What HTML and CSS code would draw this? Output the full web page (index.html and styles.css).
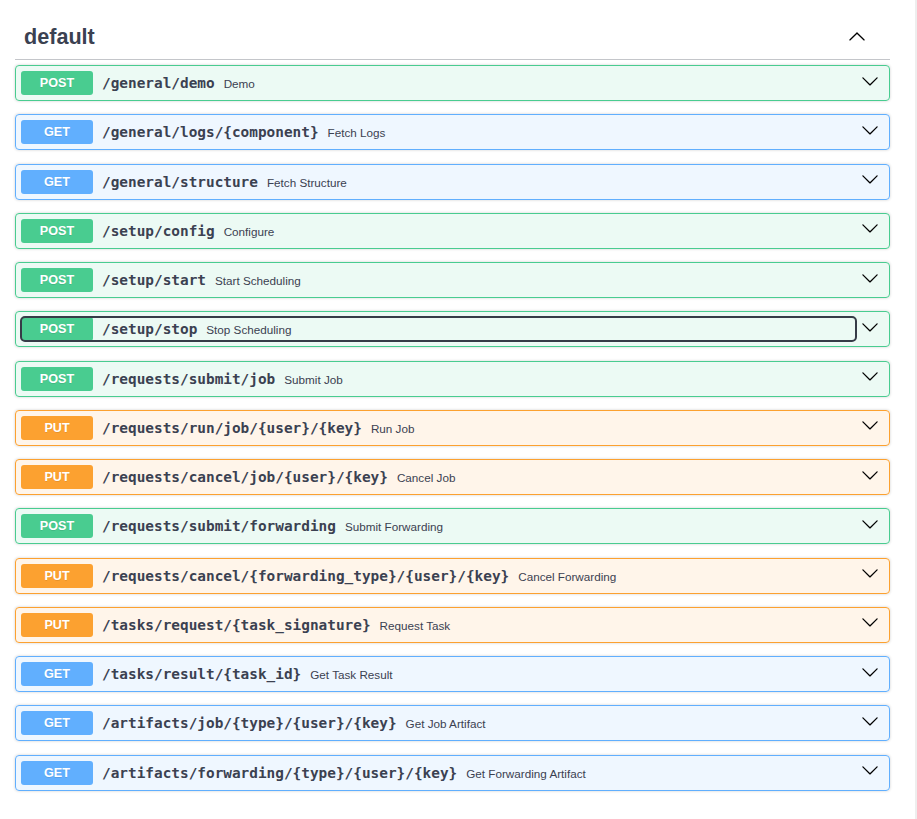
FILE: index.html
```html
<!DOCTYPE html>
<html lang="en">
<head>
<meta charset="utf-8">
<title>default</title>
<link rel="stylesheet" href="styles.css">
</head>
<body>
<div class="wrapper">
  <div class="tag">
    <h3 class="tag-title">default</h3>
    <button class="tag-toggle" aria-label="Collapse">
      <svg class="icon" viewBox="0 0 20 20" width="18" height="18"><path d="M17.418 14.908c.272.268.709.268.979 0s.271-.701 0-.969l-7.908-7.83c-.27-.268-.707-.268-.979 0l-7.908 7.83c-.27.268-.27.701 0 .969.271.268.709.268.979 0L10 7.767l7.418 7.141z"/></svg>
    </button>
  </div>

  <div class="op op-post"><div class="summary"><div class="control"><span class="method">POST</span><span class="path">/general/demo</span><span class="desc">Demo</span></div><span class="arrow"><svg class="icon" viewBox="0 0 20 20" width="18" height="18"><path d="M17.418 6.109c.272-.268.709-.268.979 0s.271.701 0 .969l-7.908 7.83c-.27.268-.707.268-.979 0l-7.908-7.83c-.27-.268-.27-.701 0-.969.271-.268.709-.268.979 0L10 13.25l7.418-7.141z"/></svg></span></div></div>

  <div class="op op-get"><div class="summary"><div class="control"><span class="method">GET</span><span class="path">/general/logs/{component}</span><span class="desc">Fetch Logs</span></div><span class="arrow"><svg class="icon" viewBox="0 0 20 20" width="18" height="18"><path d="M17.418 6.109c.272-.268.709-.268.979 0s.271.701 0 .969l-7.908 7.83c-.27.268-.707.268-.979 0l-7.908-7.83c-.27-.268-.27-.701 0-.969.271-.268.709-.268.979 0L10 13.25l7.418-7.141z"/></svg></span></div></div>

  <div class="op op-get"><div class="summary"><div class="control"><span class="method">GET</span><span class="path">/general/structure</span><span class="desc">Fetch Structure</span></div><span class="arrow"><svg class="icon" viewBox="0 0 20 20" width="18" height="18"><path d="M17.418 6.109c.272-.268.709-.268.979 0s.271.701 0 .969l-7.908 7.83c-.27.268-.707.268-.979 0l-7.908-7.83c-.27-.268-.27-.701 0-.969.271-.268.709-.268.979 0L10 13.25l7.418-7.141z"/></svg></span></div></div>

  <div class="op op-post"><div class="summary"><div class="control"><span class="method">POST</span><span class="path">/setup/config</span><span class="desc">Configure</span></div><span class="arrow"><svg class="icon" viewBox="0 0 20 20" width="18" height="18"><path d="M17.418 6.109c.272-.268.709-.268.979 0s.271.701 0 .969l-7.908 7.83c-.27.268-.707.268-.979 0l-7.908-7.83c-.27-.268-.27-.701 0-.969.271-.268.709-.268.979 0L10 13.25l7.418-7.141z"/></svg></span></div></div>

  <div class="op op-post"><div class="summary"><div class="control"><span class="method">POST</span><span class="path">/setup/start</span><span class="desc">Start Scheduling</span></div><span class="arrow"><svg class="icon" viewBox="0 0 20 20" width="18" height="18"><path d="M17.418 6.109c.272-.268.709-.268.979 0s.271.701 0 .969l-7.908 7.83c-.27.268-.707.268-.979 0l-7.908-7.83c-.27-.268-.27-.701 0-.969.271-.268.709-.268.979 0L10 13.25l7.418-7.141z"/></svg></span></div></div>

  <div class="op op-post"><div class="summary"><div class="control focused"><span class="method">POST</span><span class="path">/setup/stop</span><span class="desc">Stop Scheduling</span></div><span class="arrow"><svg class="icon" viewBox="0 0 20 20" width="18" height="18"><path d="M17.418 6.109c.272-.268.709-.268.979 0s.271.701 0 .969l-7.908 7.83c-.27.268-.707.268-.979 0l-7.908-7.83c-.27-.268-.27-.701 0-.969.271-.268.709-.268.979 0L10 13.25l7.418-7.141z"/></svg></span></div></div>

  <div class="op op-post"><div class="summary"><div class="control"><span class="method">POST</span><span class="path">/requests/submit/job</span><span class="desc">Submit Job</span></div><span class="arrow"><svg class="icon" viewBox="0 0 20 20" width="18" height="18"><path d="M17.418 6.109c.272-.268.709-.268.979 0s.271.701 0 .969l-7.908 7.83c-.27.268-.707.268-.979 0l-7.908-7.83c-.27-.268-.27-.701 0-.969.271-.268.709-.268.979 0L10 13.25l7.418-7.141z"/></svg></span></div></div>

  <div class="op op-put"><div class="summary"><div class="control"><span class="method">PUT</span><span class="path">/requests/run/job/{user}/{key}</span><span class="desc">Run Job</span></div><span class="arrow"><svg class="icon" viewBox="0 0 20 20" width="18" height="18"><path d="M17.418 6.109c.272-.268.709-.268.979 0s.271.701 0 .969l-7.908 7.83c-.27.268-.707.268-.979 0l-7.908-7.83c-.27-.268-.27-.701 0-.969.271-.268.709-.268.979 0L10 13.25l7.418-7.141z"/></svg></span></div></div>

  <div class="op op-put"><div class="summary"><div class="control"><span class="method">PUT</span><span class="path">/requests/cancel/job/{user}/{key}</span><span class="desc">Cancel Job</span></div><span class="arrow"><svg class="icon" viewBox="0 0 20 20" width="18" height="18"><path d="M17.418 6.109c.272-.268.709-.268.979 0s.271.701 0 .969l-7.908 7.83c-.27.268-.707.268-.979 0l-7.908-7.83c-.27-.268-.27-.701 0-.969.271-.268.709-.268.979 0L10 13.25l7.418-7.141z"/></svg></span></div></div>

  <div class="op op-post"><div class="summary"><div class="control"><span class="method">POST</span><span class="path">/requests/submit/forwarding</span><span class="desc">Submit Forwarding</span></div><span class="arrow"><svg class="icon" viewBox="0 0 20 20" width="18" height="18"><path d="M17.418 6.109c.272-.268.709-.268.979 0s.271.701 0 .969l-7.908 7.83c-.27.268-.707.268-.979 0l-7.908-7.83c-.27-.268-.27-.701 0-.969.271-.268.709-.268.979 0L10 13.25l7.418-7.141z"/></svg></span></div></div>

  <div class="op op-put"><div class="summary"><div class="control"><span class="method">PUT</span><span class="path">/requests/cancel/{forwarding_type}/{user}/{key}</span><span class="desc">Cancel Forwarding</span></div><span class="arrow"><svg class="icon" viewBox="0 0 20 20" width="18" height="18"><path d="M17.418 6.109c.272-.268.709-.268.979 0s.271.701 0 .969l-7.908 7.83c-.27.268-.707.268-.979 0l-7.908-7.83c-.27-.268-.27-.701 0-.969.271-.268.709-.268.979 0L10 13.25l7.418-7.141z"/></svg></span></div></div>

  <div class="op op-put"><div class="summary"><div class="control"><span class="method">PUT</span><span class="path">/tasks/request/{task_signature}</span><span class="desc">Request Task</span></div><span class="arrow"><svg class="icon" viewBox="0 0 20 20" width="18" height="18"><path d="M17.418 6.109c.272-.268.709-.268.979 0s.271.701 0 .969l-7.908 7.83c-.27.268-.707.268-.979 0l-7.908-7.83c-.27-.268-.27-.701 0-.969.271-.268.709-.268.979 0L10 13.25l7.418-7.141z"/></svg></span></div></div>

  <div class="op op-get"><div class="summary"><div class="control"><span class="method">GET</span><span class="path">/tasks/result/{task_id}</span><span class="desc">Get Task Result</span></div><span class="arrow"><svg class="icon" viewBox="0 0 20 20" width="18" height="18"><path d="M17.418 6.109c.272-.268.709-.268.979 0s.271.701 0 .969l-7.908 7.83c-.27.268-.707.268-.979 0l-7.908-7.83c-.27-.268-.27-.701 0-.969.271-.268.709-.268.979 0L10 13.25l7.418-7.141z"/></svg></span></div></div>

  <div class="op op-get"><div class="summary"><div class="control"><span class="method">GET</span><span class="path">/artifacts/job/{type}/{user}/{key}</span><span class="desc">Get Job Artifact</span></div><span class="arrow"><svg class="icon" viewBox="0 0 20 20" width="18" height="18"><path d="M17.418 6.109c.272-.268.709-.268.979 0s.271.701 0 .969l-7.908 7.83c-.27.268-.707.268-.979 0l-7.908-7.83c-.27-.268-.27-.701 0-.969.271-.268.709-.268.979 0L10 13.25l7.418-7.141z"/></svg></span></div></div>

  <div class="op op-get"><div class="summary"><div class="control"><span class="method">GET</span><span class="path">/artifacts/forwarding/{type}/{user}/{key}</span><span class="desc">Get Forwarding Artifact</span></div><span class="arrow"><svg class="icon" viewBox="0 0 20 20" width="18" height="18"><path d="M17.418 6.109c.272-.268.709-.268.979 0s.271.701 0 .969l-7.908 7.83c-.27.268-.707.268-.979 0l-7.908-7.83c-.27-.268-.27-.701 0-.969.271-.268.709-.268.979 0L10 13.25l7.418-7.141z"/></svg></span></div></div>
</div>
</body>
</html>
```

FILE: styles.css
```css
html, body {
  margin: 0;
  padding: 0;
  background: #ffffff;
}

body {
  box-sizing: border-box;
  min-height: 100vh;
  border-right: 2px solid #eeeeee;
  font-family: "Liberation Sans", Arial, sans-serif;
  color: #3b4151;
}

.wrapper {
  padding: 15px 25px 0 15px;
}

.tag {
  display: flex;
  align-items: center;
  height: 44px;
  border-bottom: 1px solid rgba(59, 65, 81, 0.3);
  margin-bottom: 5px;
}

.tag-title {
  flex: 1;
  margin: 0;
  padding-left: 9px;
  font-family: "Liberation Sans", Arial, sans-serif;
  font-weight: 700;
  font-size: 21.6px;
  line-height: 1.15;
  color: #3b4151;
}

.tag-toggle {
  display: flex;
  border: none;
  background: none;
  padding: 0;
  margin: -2px 24px 0 0;
}

.icon {
  display: block;
  fill: #000000;
}

.op {
  border: 1px solid;
  border-radius: 4px;
  margin-bottom: 13.25px;
  box-shadow: 0 0 3px rgba(0, 0, 0, 0.19);
}

.summary {
  display: flex;
  align-items: center;
  padding: 5px;
}

.control {
  flex: 1;
  min-width: 0;
  display: flex;
  align-items: center;
  border-radius: 4px;
}

.control.focused {
  outline: 2px solid #363b47;
  outline-offset: -1px;
}

.method {
  flex: none;
  width: 72px;
  height: 24px;
  line-height: 24px;
  text-align: center;
  border-radius: 3px;
  font-family: "Liberation Sans", Arial, sans-serif;
  font-weight: 700;
  font-size: 12.6px;
  color: #ffffff;
  text-shadow: 0 1px 0 rgba(0, 0, 0, 0.1);
}

.path {
  padding: 0 9px;
  font-family: "DejaVu Sans Mono", monospace;
  font-weight: 700;
  font-size: 14.4px;
  color: #3b4151;
  white-space: nowrap;
}

.desc {
  font-family: "Liberation Sans", Arial, sans-serif;
  font-size: 11.7px;
  color: #3b4151;
  padding-top: 1px;
  white-space: nowrap;
}

.arrow {
  display: flex;
  padding: 0 5px;
  margin-top: -5px;
}

.op-post {
  border-color: #49cc90;
  background: rgba(73, 204, 144, 0.1);
}
.op-post .method { background: #49cc90; }

.op-get {
  border-color: #61affe;
  background: rgba(97, 175, 254, 0.1);
}
.op-get .method { background: #61affe; }

.op-put {
  border-color: #fca130;
  background: rgba(252, 161, 48, 0.1);
}
.op-put .method { background: #fca130; }
```
